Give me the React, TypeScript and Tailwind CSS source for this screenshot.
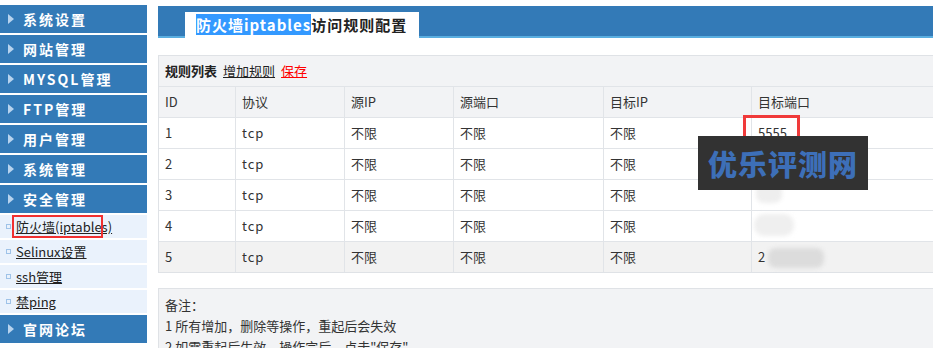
import React from 'react';

const font = { fontFamily: '"Noto Sans CJK SC", "Noto Sans", sans-serif' };

const Tri = () => (
  <svg width="6" height="10" viewBox="0 0 6 10" className="shrink-0">
    <path d="M0 0 L6 5 L0 10 Z" fill="#b7d3ee" />
  </svg>
);

const MenuHead = ({ label }: { label: string }) => (
  <div className="h-[28px] mb-[2px] bg-[#337ab7] flex items-center pl-[8px] gap-[9px]">
    <Tri />
    <span className="text-white font-bold text-[14px] tracking-[2px] leading-none">{label}</span>
  </div>
);

const SubItem = ({ label, boxed }: { label: string; boxed?: boolean }) => (
  <div className="h-[23px] mb-[2px] bg-[#eaf2fc] flex items-center pl-[6px] gap-[5px] relative">
    <span className="w-[5px] h-[5px] border border-[#9fc3e8] shrink-0" />
    <a className="text-[13px] text-[#222] underline leading-none whitespace-nowrap">{label}</a>
    {boxed && <div className="absolute left-[12px] top-[0px] w-[91px] h-[23px] border-2 border-[#f03030]" />}
  </div>
);

const rows = [
  { id: '1', port: '5555' },
  { id: '2', port: '' },
  { id: '3', port: '' },
  { id: '4', port: '' },
  { id: '5', port: '2' },
];

export default function App() {
  return (
    <div className="w-[933px] h-[348px] overflow-hidden bg-white flex pt-[5px] relative" style={font}>
      {/* sidebar */}
      <div className="w-[147px] shrink-0">
        <MenuHead label="系统设置" />
        <MenuHead label="网站管理" />
        <MenuHead label="MYSQL管理" />
        <MenuHead label="FTP管理" />
        <MenuHead label="用户管理" />
        <MenuHead label="系统管理" />
        <MenuHead label="安全管理" />
        <SubItem label="防火墙(iptables)" boxed />
        <SubItem label="Selinux设置" />
        <SubItem label="ssh管理" />
        <SubItem label="禁ping" />
        <MenuHead label="官网论坛" />
      </div>

      {/* main */}
      <div className="ml-[11px] w-[800px] shrink-0 pt-[1px]">
        <div className="h-[32px] bg-[#337ab7] border-b-2 border-[#5aaee0] flex items-end pl-[27px]">
          <div className="h-[26px] w-[234px] bg-white flex items-center pl-[11px] -mb-[2px]">
            <span className="text-[15px] font-bold tracking-[1px] leading-[22px] whitespace-nowrap">
              <span className="bg-[#3399ff] text-white">防火墙iptables</span>
              <span className="text-[#222]">访问规则配置</span>
            </span>
          </div>
        </div>

        <div className="mt-[17px] border border-[#dfe2e6] bg-[#f2f3f5]">
          <div className="h-[30px] flex items-center pl-[6px] gap-[6px] text-[13px]">
            <span className="text-[#222] font-bold">规则列表</span>
            <a className="text-[#222] underline">增加规则</a>
            <a className="text-[#f00] underline">保存</a>
          </div>
          <div className="grid grid-cols-[76px_109px_109px_150px_148px_1fr] text-[13px] text-[#333]">
            {['ID', '协议', '源IP', '源端口', '目标IP', '目标端口'].map((h, i) => (
              <div key={h} className={`h-[31px] flex items-center pl-[6px] border-t border-[#e1e4e8] ${i > 0 ? 'border-l' : ''}`}>{h}</div>
            ))}
            {rows.map((r, ri) => {
              const bg = ri === 4 ? 'bg-[#f2f2f2]' : 'bg-white';
              const cells = [r.id, 'tcp', '不限', '不限', '不限', r.port];
              return cells.map((c, i) => (
                <div key={`${ri}-${i}`} className={`h-[31px] flex items-center pl-[6px] border-t border-[#e1e4e8] ${bg} ${i > 0 ? 'border-l' : ''} ${i === 1 ? 'tracking-[1px]' : ''} relative`}>
                  {c}
                  {i === 5 && ri === 2 && <div className="absolute left-[4px] top-[3px] w-[26px] h-[20px] rounded-[8px] bg-[#eeeeee] blur-[2px]" />}
                  {i === 5 && ri === 3 && <div className="absolute left-[2px] top-[3px] w-[40px] h-[22px] rounded-[10px] bg-[#efefef] blur-[2px]" />}
                  {i === 5 && ri === 4 && <div className="absolute left-[16px] top-[6px] w-[56px] h-[20px] rounded-[8px] bg-[#dcdcdc] blur-[2px]" />}
                </div>
              ));
            })}
          </div>
        </div>

        <div className="mt-[15px] border border-[#dfe2e6] bg-[#f2f3f5] pl-[6px] pt-[5px] text-[13px] text-[#333] leading-[21px] h-[80px]">
          <div>备注：</div>
          <div>1 所有增加，删除等操作，重起后会失效</div>
          <div>2 如需重起后生效，操作完后，点击"保存"</div>
        </div>
      </div>

      {/* red highlight on port */}
      <div className="absolute left-[743px] top-[115px] w-[57px] h-[30px] border-[3px] border-[#f03a3a]" />

      {/* watermark */}
      <div className="absolute left-[698px] top-[136px] w-[170px] h-[54px] bg-[#323232] flex items-center justify-center">
        <span className="text-[#3d6fb8] text-[29px] font-black tracking-[1px] leading-none">优乐评测网</span>
      </div>
    </div>
  );
}
